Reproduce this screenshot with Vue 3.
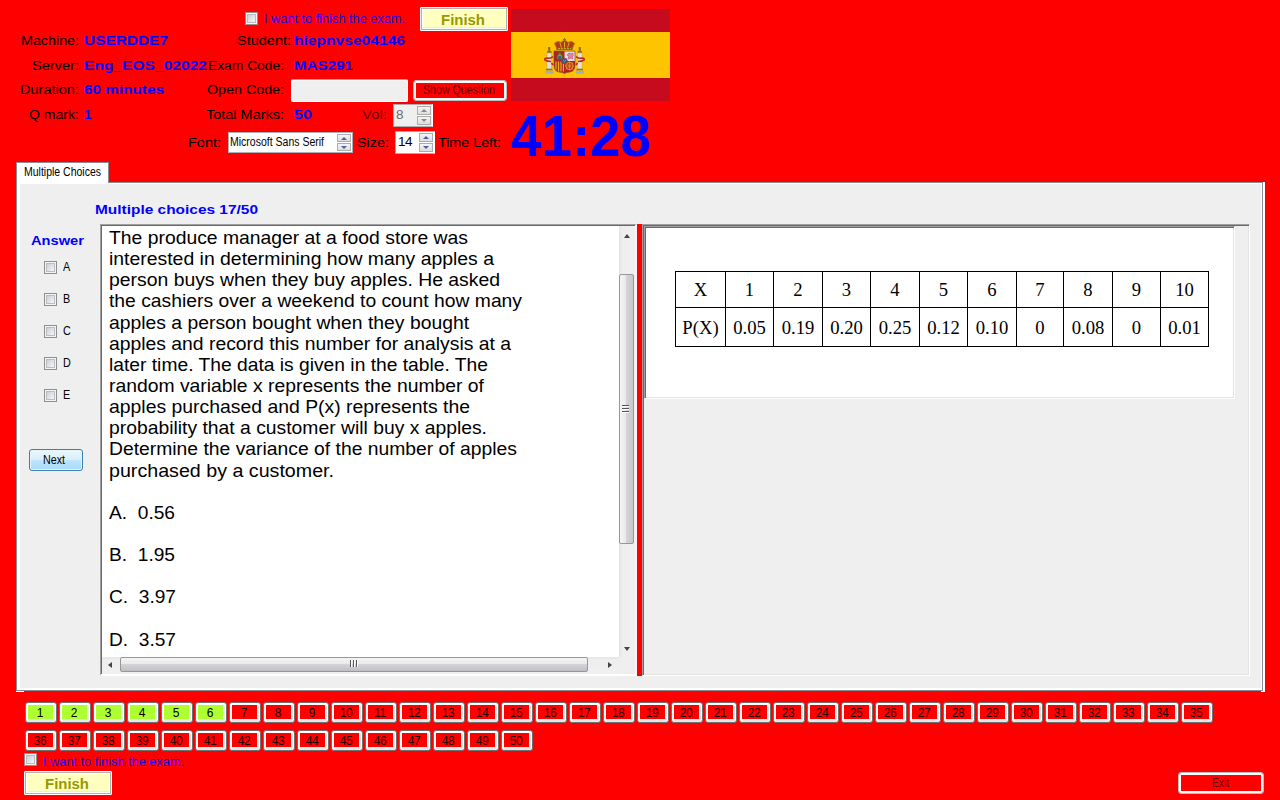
<script setup>
import { ref } from 'vue'

// Stretches or narrows a run of text so that it takes up the given width.
const vFit = {
  mounted(el, { value }) {
    const natural = el.getBoundingClientRect().width
    el.style.width = value + 'px'
    el.style.transform = `scaleX(${value / natural})`
  },
}

const answers = ['A', 'B', 'C', 'D', 'E']
const lines = [
  ['The produce manager at a food store was', 359],
  ['interested in determining how many apples a', 385],
  ['person buys when they buy apples. He asked', 391],
  ['the cashiers over a weekend to count how many', 413],
  ['apples a person bought when they bought', 360],
  ['apples and record this number for analysis at a', 402],
  ['later time. The data is given in the table. The', 379],
  ['random variable x represents the number of', 375],
  ['apples purchased and P(x) represents the', 361],
  ['probability that a customer will buy x apples.', 378],
  ['Determine the variance of the number of apples', 408],
  ['purchased by a customer.', 225],
  ['', 0],
  ['A.  0.56', 66],
  ['', 0],
  ['B.  1.95', 66],
  ['', 0],
  ['C.  3.97', 67],
  ['', 0],
  ['D.  3.57', 67],
]
const xs = ['X', '1', '2', '3', '4', '5', '6', '7', '8', '9', '10']
const ps = ['P(X)', '0.05', '0.19', '0.20', '0.25', '0.12', '0.10', '0', '0.08', '0', '0.01']
const answered = ref(6)
</script>

<template>
  <div class="screen">
    <header class="header">
      <div class="info">
        <div class="row r0">
          <i class="check"></i>
          <div class="want"><span v-fit="141" class="fit">I want to finish the exam.</span></div>
          <button class="finish"><span v-fit="44" class="fit">Finish</span></button>
        </div>
        <div class="row r1">
          <span class="l1"><span v-fit="58" class="fit">Machine:</span></span>
          <b class="v1"><span v-fit="84" class="fit">USERDDE7</span></b>
          <span class="l2 student"><span v-fit="54" class="fit">Student:</span></span>
          <b><span v-fit="111" class="fit">hiepnvse04146</span></b>
        </div>
        <div class="row r2">
          <span class="l1"><span v-fit="47" class="fit">Server:</span></span>
          <b class="v1"><span v-fit="123" class="fit">Eng_EOS_02022</span></b>
          <span class="l2"><span v-fit="76" class="fit">Exam Code:</span></span>
          <b><span v-fit="59" class="fit">MAS291</span></b>
        </div>
        <div class="row r3">
          <span class="l1"><span v-fit="59" class="fit">Duration:</span></span>
          <b class="v1"><span v-fit="80" class="fit">60 minutes</span></b>
          <span class="l2 open"><span v-fit="77" class="fit">Open Code:</span></span>
          <i class="field"></i>
          <button class="flat show"><span v-fit="72" class="fit">Show Question</span></button>
        </div>
        <div class="row r4">
          <span class="l1"><span v-fit="50" class="fit">Q mark:</span></span>
          <b class="v1">1</b>
          <span class="l2"><span v-fit="78" class="fit">Total Marks:</span></span>
          <b class="marks"><span v-fit="18" class="fit">50</span></b>
          <span class="vol"><span v-fit="25" class="fit">Vol:</span></span>
          <div class="spin off">
            <em>8</em>
            <div class="ud"><i><s class="up"></s></i><i><s class="dn"></s></i></div>
          </div>
        </div>
        <div class="row r5">
          <span class="fontl"><span v-fit="33" class="fit">Font:</span></span>
          <div class="spin wide">
            <em class="ms"><span v-fit="94" class="fit">Microsoft Sans Serif</span></em>
            <div class="ud"><i><s class="up"></s></i><i><s class="dn"></s></i></div>
          </div>
          <span class="sizel"><span v-fit="32" class="fit">Size:</span></span>
          <div class="spin">
            <em>14</em>
            <div class="ud"><i><s class="up"></s></i><i><s class="dn"></s></i></div>
          </div>
          <span class="timel"><span v-fit="63" class="fit">Time Left:</span></span>
        </div>
      </div>
      <div class="side">
        <div class="flag">
          <svg width="42" height="38" viewBox="0 0 42 38">
            <!-- crown -->
            <path d="M20.500 1v4M19 2.500h3" stroke="#8a7a2c" stroke-width="1.200" />
            <path d="M13 12L10.500 6.500Q13 3 17 5.500Q20.500 1.500 24 5.500Q28 3 30.500 6.500L28 12Z" fill="#b3391f" stroke="#a57a1c" />
            <path d="M16 6l1.500 5M20.500 5v6M25 6l-1.500 5" stroke="#e0a61c" fill="none" />
            <path d="M12.500 10.500h16v2.500h-16z" fill="#8f5a18" />
            <path d="M14 11.700h13" stroke="#d9b23c" stroke-dasharray="2 1" />
            <!-- pillars -->
            <path d="M3 14h4.500v2H3zM33.500 14H38v2h-4.500z" fill="#98742a" />
            <path d="M5.200 10v4M35.800 10v4" stroke="#96702a" stroke-width="2.200" />
            <path d="M3 16h4.400v16H3zM33.600 16h4.400v16h-4.400z" fill="#e4e1dc" stroke="#b5a78d" stroke-width=".5" />
            <path d="M2 32.500h6.500M32.500 32.500H39" stroke="#97722a" stroke-width="1.500" />
            <path d="M1.500 35h8M32 35h8" stroke="#7192a8" stroke-width="2.500" />
            <path d="M1.500 35h8M32 35h8" stroke="#e6e0d0" stroke-width=".8" />
            <path d="M9 19.500Q7 22 3 21Q0 21 1 23Q3 24.500 7 24.500M7.500 26L9 28M32 19.500Q34 22 38 21Q41 21 40 23Q38 24.500 34 24.500M33.500 26L32 28" fill="none" stroke="#bf2a1c" stroke-width="1.600" />
            <!-- shield -->
            <path d="M10 14h21v14q0 6-5 7q-4 0-5.500 1.500Q19 35 15 35q-5-1-5-7z" fill="#b71f24" stroke="#7d4b1c" stroke-width=".7" />
            <path d="M20.500 14.400h10.200V24H20.500z" fill="#e3dde0" />
            <path d="M13 22v-4h1.500v-2h2.500v2h1.500v4z" fill="#b08c26" stroke="#54681f" />
            <path d="M14.300 22v-3h3v3" fill="#355f8d" />
            <path d="M24 22l1-3-2-1 2-2 2 1 2-1v3l-1 1 1 2-2-1z" fill="#dc87a8" stroke="#cd6f95" />
            <path d="M12 24.500v8M14.500 24.500v10M17 24.500v10M19.400 24.500v10" stroke="#e3b320" stroke-width="1.200" />
            <circle cx="25.500" cy="29" r="3.700" fill="none" stroke="#e3a323" />
            <path d="M22 25.500l7 7M29 25.500l-7 7M25.500 24.500v9M21.500 29h8" stroke="#dda323" stroke-width=".7" />
            <circle cx="20.500" cy="24" r="2.800" fill="#1d60a8" stroke="#a43232" stroke-width=".8" />
            <path d="M19.300 23.300h.8M21.200 23.300h.8M20.200 25h.8" stroke="#d0b344" />
          </svg>
        </div>
        <div class="timer"><span v-fit="140" class="fit">41:28</span></div>
      </div>
    </header>

    <div class="tabrow"><div class="tab"><span v-fit="77" class="fit">Multiple Choices</span></div></div>

    <main class="page">
      <div class="title"><span v-fit="163" class="fit">Multiple choices 17/50</span></div>
      <div class="body">
        <aside class="answers">
          <div class="answer"><span v-fit="53" class="fit">Answer</span></div>
          <label v-for="a in answers" :key="a"><i class="check"></i><span class="letter">{{ a }}</span></label>
          <button class="next"><span v-fit="22" class="fit">Next</span></button>
        </aside>

        <section class="question">
          <div class="text">
            <div v-for="(l, i) in lines" :key="i" class="line"><span v-if="l[0]" v-fit="l[1]" class="fit">{{ l[0] }}</span></div>
          </div>
          <div class="vbar">
            <s class="up"></s>
            <div class="thumb"><u></u></div>
            <s class="dn"></s>
          </div>
          <div class="hbar">
            <s class="lt"></s>
            <div class="thumb"><u></u></div>
            <s class="rt"></s>
          </div>
          <div class="corner"></div>
        </section>

        <div class="splitter"></div>

        <section class="picture">
          <div class="paper">
            <table>
              <colgroup><col v-for="(x, i) in xs" :key="i" :class="'c' + i" /></colgroup>
              <tbody>
                <tr class="t1"><td v-for="(x, i) in xs" :key="i">{{ x }}</td></tr>
                <tr class="t2"><td v-for="(p, i) in ps" :key="i">{{ p }}</td></tr>
              </tbody>
            </table>
          </div>
        </section>
      </div>
    </main>
    <div class="feet"><i></i><i></i></div>

    <nav class="numbers">
      <button v-for="n in 50" :key="n" :class="{ done: n <= answered }"><span>{{ n }}</span></button>
    </nav>

    <footer class="footer">
      <div>
        <div class="agree"><i class="check"></i><div class="want"><span v-fit="141" class="fit">I want to finish the exam.</span></div></div>
        <button class="finish"><span v-fit="44" class="fit">Finish</span></button>
      </div>
      <button class="flat exit"><span v-fit="17" class="fit">Exit</span></button>
    </footer>
  </div>
</template>

<style>
body { background: #f00; overflow: hidden; }
</style>

<style scoped>
* { box-sizing: border-box; }
.screen { width: 1280px; height: 800px; background: #f00; color: #000; font: 13.5px/16px "Liberation Sans", Arial, sans-serif; overflow: hidden; }
span { white-space: pre; }
.fit { display: inline-block; text-align: left; transform-origin: 0 50%; }
i, em, b { font-style: normal; }
s, u { text-decoration: none; }
button { font: inherit; padding: 0; margin: 0; border: 0; display: flex; align-items: center; justify-content: center; flex: none; }

.header { display: flex; height: 162px; }
.info { width: 511px; flex: none; }
.row { display: flex; align-items: center; white-space: nowrap; }
.row > * { flex: none; }
.row b { color: #00f; }
.r0 { height: 31px; padding: 7px 0 0 245px; }
.r0 .want { margin-left: 6px; width: 156px; }
.r0 .check { margin-top: -1px; }
.r1 { height: 19px; }
.r2 { height: 31px; }
.r3 { height: 18px; }
.r4 { height: 31px; padding-top: 1px; }
.r5 { height: 25px; }
.l1 { width: 79px; text-align: right; margin-right: 5px; }
.v1 { width: 122px; }
.l2 { width: 78px; text-align: right; margin-right: 10px; }
.student { width: 85px; margin-right: 3px; }
.open { margin-right: 7px; }
.marks { width: 68px; }
.vol { color: #700000; width: 31px; }
.fontl { padding-left: 188px; width: 228px; }
.sizel { width: 42px; padding-left: 4px; }
.timel { padding-left: 2px; }
.want { color: #1c00f0; font-size: 13.5px; }

.check { width: 13px; height: 13px; flex: none; border: 1px solid #8e8f8f; background: linear-gradient(135deg, #cbcfd5, #f6f6f6) content-box, #f4f4f4; padding: 2px; display: block; box-shadow: inset 0 0 0 1px #f4f4f4, inset 0 0 0 2px #b9bdc3; }
.finish { width: 88px; height: 24px; border: 1px solid #fff; background: #ffffc0; color: #989800; font-weight: bold; font-size: 14px; box-shadow: inset 0 0 0 1px #adb2b5, inset 0 0 0 2px #fdfdfd, inset 0 -3px 0 0 #ececec; border-radius: 1px; padding-left: 0; }
.finish span { position: relative; top: 1px; left: -1px; }
.flat { background: #f00; color: #600000; font-size: 12px; border: 1px solid #bcbcbc; border-radius: 3px; box-shadow: inset 0 0 0 2px #f8f8f8; }
.show { width: 94px; height: 21px; margin-left: 5px; }
.show span { position: relative; left: -1px; }
.exit { width: 86px; height: 22px; }
.exit span { position: relative; left: -1px; }
.field { width: 117px; height: 23px; background: #efefef; border: 1px solid #fff; border-top-color: #aaa; border-radius: 2px; box-shadow: inset 1px 1px 0 #fff; }
.spin { width: 40px; height: 23px; background: #fff; border: 1px solid #abadb3; border-right-color: #fff; display: flex; justify-content: space-between; padding: 1px; line-height: 18px; margin-right: 1px; }
.spin em { padding-left: 1px; letter-spacing: -0.4px; }
.spin .ms { font-size: 12px; line-height: 16px; padding-left: 0; letter-spacing: 0; }
.off { background: #efefef; color: #6d6d6d; }
.wide { width: 125px; height: 21px; margin-right: 0; border-right-color: #abadb3; }
.ud { width: 14px; display: flex; flex-direction: column; gap: 1px; background: #fff; }
.wide .ud { margin-right: 0; }
.ud i { flex: 1; border: 1px solid #acacac; background: linear-gradient(#f5f5f5, #ddd); display: flex; align-items: center; justify-content: center; }
.ud s { border: 3px solid transparent; }
.ud .up { border-bottom-color: #4b5fa9; border-top: 0; }
.ud .dn { border-top-color: #4b5fa9; border-bottom: 0; }
.off .ud .up { border-bottom-color: #888; }
.off .ud .dn { border-top-color: #888; }

.flag { width: 159px; height: 92px; margin-top: 9px; background: linear-gradient(#c60b1e 23px, #ffc400 23px, #ffc400 69px, #c60b1e 69px); padding: 28px 0 0 33px; }
.flag svg { display: block; }
.timer { font-size: 57px; line-height: 60px; font-weight: bold; color: #00f; margin-top: 5px; height: 56px; }

.tabrow { height: 20px; padding-left: 16px; }
.tab { position: relative; z-index: 1; width: 93px; height: 21px; background: #fff; border: 1px solid #898c95; border-bottom: 0; font-size: 12px; line-height: 18px; padding-left: 7px; }
.page { margin-left: 16px; width: 1247px; height: 509px; background: #efefef; border: 1px solid #898c95; box-shadow: inset 3px 1px 0 #fff, inset -1px -2px 0 #fff, 2px 0 0 #fff; }
.title { height: 41px; padding: 19px 0 0 78px; color: #00f; font-weight: bold; }
.body { display: flex; height: 452px; }
.answers { width: 83px; padding: 9px 0 0 12px; flex: none; }
.answer { color: #00f; font-weight: bold; padding-left: 2px; height: 28px; }
.answers label { display: flex; align-items: center; height: 13px; margin-bottom: 19px; padding-left: 15px; gap: 6px; font-size: 12px; }
.letter { position: relative; top: -1px; transform: scaleX(.9); transform-origin: 0 0; }
.next { margin-top: 47px; width: 54px; height: 22px; border: 1px solid #3c7fb1; border-radius: 3px; font-size: 12px; background: linear-gradient(#eaf6fd 0, #d9f0fc 48%, #bee6fd 50%, #a7d9f5); box-shadow: inset 0 0 0 1px #e6f5fc; }
.next span { position: relative; left: -2px; }

.question { width: 537px; height: 452px; flex: none; display: grid; grid-template-columns: 517px 16px; grid-template-rows: 431px 17px; border: 2px solid #fff; border-top: 1px solid #a0a0a0; border-left: 1px solid #a0a0a0; box-shadow: inset 1px 1px 0 #696969; background: #fff; padding: 1px 0 0 1px; border-right: 2px solid #f4f4f4; }
.text { overflow: hidden; padding: 1px 0 0 7px; font-size: 18.67px; }
.line { height: 21.15px; line-height: 21.15px; }
.vbar, .hbar { background: linear-gradient(90deg, #e3e3e3, #eee 20%, #f0f0f0); display: flex; align-items: center; }
.vbar { flex-direction: column; padding: 8px 1px 6px 0; }
.hbar { padding: 0 9px 2px 6px; background: linear-gradient(#e6e6e6, #eee 20%, #f0f0f0); }
.corner { background: #efefef; }
.thumb { border: 1px solid #979797; border-radius: 2px; display: flex; align-items: center; justify-content: center; flex: none; }
.vbar .thumb { width: 15px; height: 270px; margin: 36px 0 102px; background: linear-gradient(90deg, #f5f5f5, #e9e9eb 45%, #d4d4d7 50%, #c8c8cc); }
.hbar .thumb { height: 15px; width: 468px; margin: 0 20px 0 8px; flex: none; background: linear-gradient(#f5f5f5, #e9e9eb 45%, #d4d4d7 50%, #c0c0c4); }
.thumb u { width: 7px; height: 8px; margin-right: 2px; background: repeating-linear-gradient(#555 0 1px, #fff 1px 2px, transparent 2px 3px); }
.hbar .thumb u { width: 8px; height: 7px; margin: 0 0 2px; background: repeating-linear-gradient(90deg, #555 0 1px, #fff 1px 2px, transparent 2px 3px); }
.vbar s, .hbar s { border: 3px solid transparent; flex: none; }
.vbar .up { border-top: 0; border-bottom-color: #444; border-bottom-width: 4px; }
.vbar .dn { border-bottom: 0; border-top-color: #444; border-top-width: 4px; margin-top: auto; }
.hbar .lt { border-left: 0; border-right-color: #444; border-right-width: 4px; }
.hbar .rt { border-right: 0; border-left-color: #444; border-left-width: 4px; }
.splitter { width: 5px; background: #f00; flex: none; }
.picture { width: 608px; height: 452px; border: 1px solid #fff; border-top-color: #a0a0a0; border-left-color: #a0a0a0; box-shadow: inset 1px 1px 0 #696969, inset -1px -1px 0 #e3e3e3; padding: 1px 0 0 1px; flex: none; }
.paper { width: 591px; height: 173px; background: #fff; border: 1px solid #fff; border-top-color: #a0a0a0; border-left-color: #a0a0a0; box-shadow: inset 1px 1px 0 #696969, inset -1px -1px 0 #e3e3e3; padding: 44px 0 0 30px; }
table { border-collapse: collapse; table-layout: fixed; width: 534px; font: 18.67px/20px "Liberation Serif", "Times New Roman", serif; text-align: center; }
td { border: 1px solid #000; padding: 0; white-space: nowrap; }
.t1 { height: 36px; }
.t2 { height: 39px; }
.t2 td { padding-top: 2px; }
.c0 { width: 50px; }
.c1, .c3, .c5, .c9, .c10 { width: 48px; }
.c2, .c4, .c6, .c8 { width: 49px; }
.c7 { width: 47px; }

.feet { height: 1px; width: 1249px; margin-left: 16px; display: flex; justify-content: space-between; }
.feet i { width: 8px; background: #fff; }
.feet i:last-child { width: 4px; }
.numbers { display: flex; flex-wrap: wrap; width: 1190px; gap: 7px 2px; margin: 10px 0 0 25px; }
.numbers button { width: 32px; height: 21px; background: #e9e9e9; border: 1px solid #707070; border-radius: 3px; font-size: 12px; letter-spacing: -0.3px; padding: 2px 3px 3px 2px; box-shadow: inset 1px 1px 0 1px #fff, inset -1px 0 0 #fff; align-items: stretch; justify-content: flex-start; }
.numbers span { width: 25px; height: 14px; line-height: 16px; background: #f00; padding-right: 1px; color: #200000; }
.numbers .done span { background: #adff2f; color: #000; }
.footer { display: flex; justify-content: space-between; align-items: flex-end; margin: 2px 16px 0 24px; height: 42px; }
.agree { display: flex; height: 18px; gap: 6px; }
.agree .want { margin-top: 1px; }
.exit { margin-bottom: 1px; }
</style>
